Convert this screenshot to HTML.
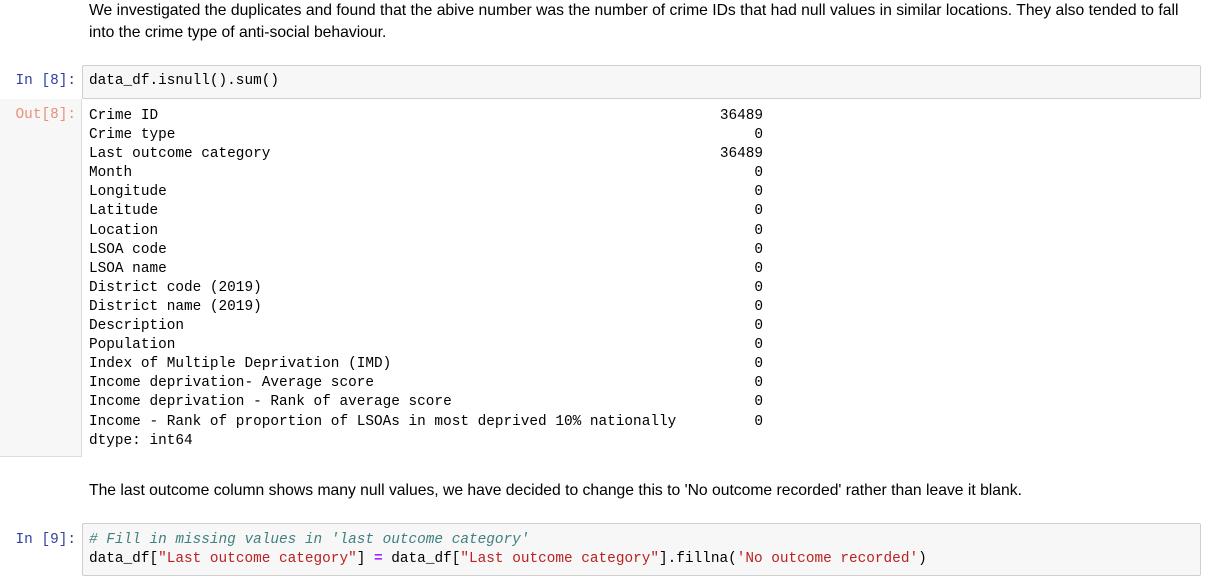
<!DOCTYPE html>
<html><head><style>
body{margin:0;width:1209px;height:580px;background:#fff;position:relative;overflow:hidden;font-family:"Liberation Sans",Arial,sans-serif}
.md{position:absolute;left:89px;font-size:15.7px;line-height:22px;color:#000}
.mono{font-family:"Liberation Mono","DejaVu Sans Mono",monospace;font-size:14.4px;white-space:pre}
.prompt{position:absolute;font-family:"Liberation Mono",monospace;font-size:14.4px;text-align:right;width:76px;left:0}
.in{color:#303f9f}.out{color:#e8917a}
.box{position:absolute;left:82px;width:1117px;background:#f7f7f7;border:1px solid #cfcfcf;border-radius:2px}
.c{color:#408080;font-style:italic}.s{color:#ba2121}.o{color:#aa22ff;font-weight:bold}
</style></head><body>
<div class="md" style="top:0px;width:1100px">We investigated the duplicates and found that the abive number was the number of crime IDs that had null values in similar locations. They also tended to fall into the crime type of anti-social behaviour.</div>

<div class="prompt in" style="top:73px">In [8]:</div>
<div class="box" style="top:65px;height:32px"></div>
<div class="mono" style="position:absolute;left:89px;top:73px">data_df.isnull().sum()</div>

<div style="position:absolute;left:0;top:99px;width:81px;height:357px;background:#f7f7f7;border-right:1px solid #ddd;border-bottom:1px solid #ddd"></div>
<div class="prompt out" style="top:107px">Out[8]:</div>
<div class="mono" style="position:absolute;left:89px;top:107px;line-height:19.1px">Crime ID
Crime type
Last outcome category
Month
Longitude
Latitude
Location
LSOA code
LSOA name
District code (2019)
District name (2019)
Description
Population
Index of Multiple Deprivation (IMD)
Income deprivation- Average score
Income deprivation - Rank of average score
Income - Rank of proportion of LSOAs in most deprived 10% nationally
dtype: int64</div>
<div class="mono" style="position:absolute;left:600px;width:163px;text-align:right;top:107px;line-height:19.1px">36489
0
36489
0
0
0
0
0
0
0
0
0
0
0
0
0
0</div>

<div class="md" style="top:480px">The last outcome column shows many null values, we have decided to change this to 'No outcome recorded' rather than leave it blank.</div>

<div class="prompt in" style="top:532px">In [9]:</div>
<div class="box" style="top:523px;height:51px"></div>
<div class="mono" style="position:absolute;left:89px;top:531px;line-height:19px"><span class="c"># Fill in missing values in 'last outcome category'</span>
data_df[<span class="s">"Last outcome category"</span>] <span class="o">=</span> data_df[<span class="s">"Last outcome category"</span>].fillna(<span class="s">'No outcome recorded'</span>)</div>
</body></html>
